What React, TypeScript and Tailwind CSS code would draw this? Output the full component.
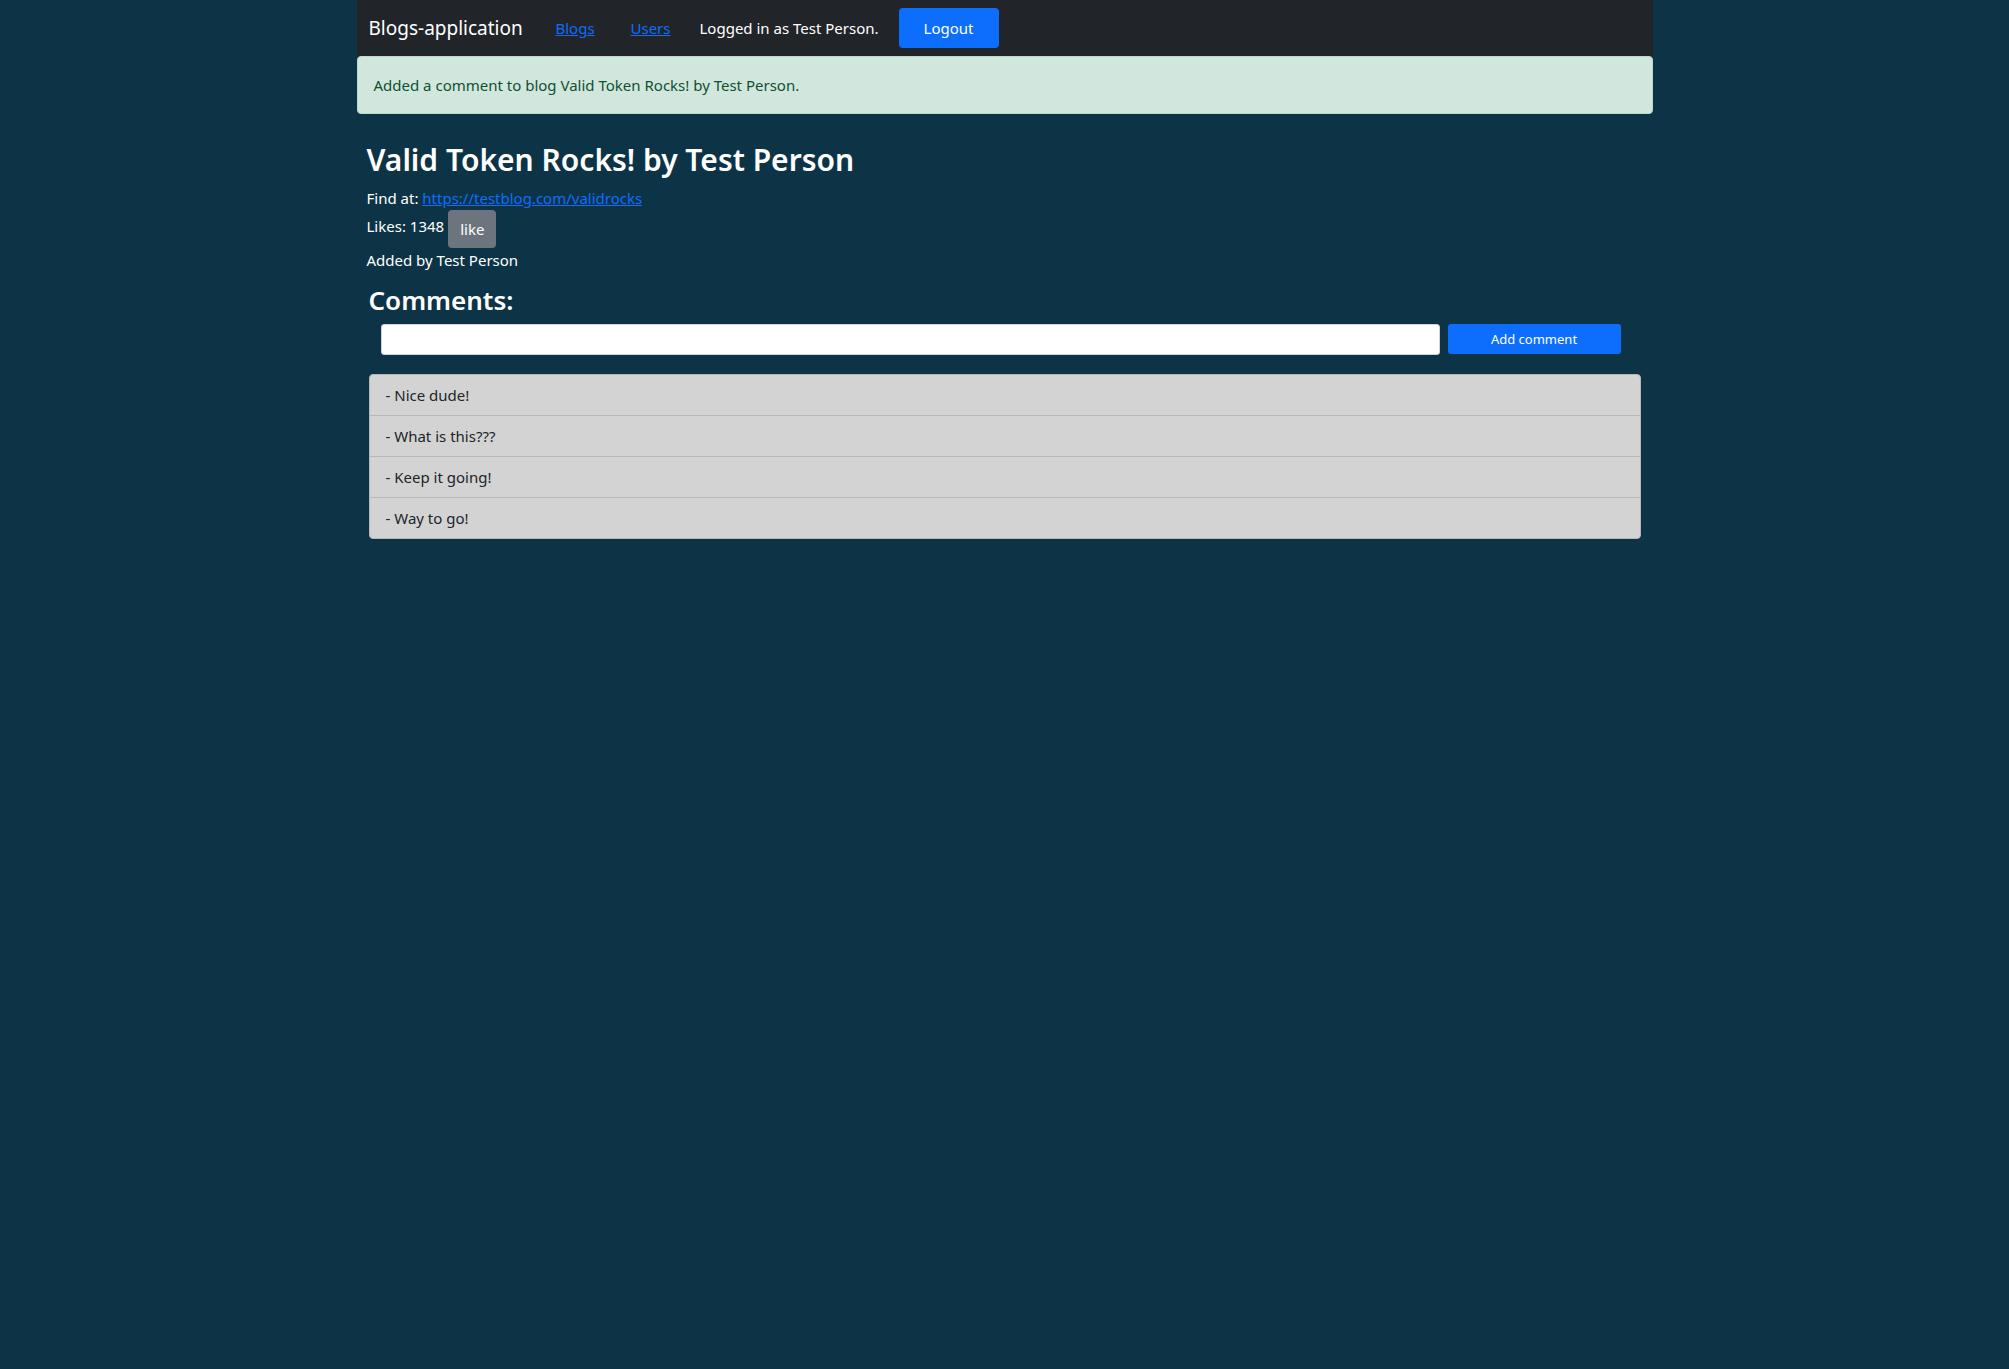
const comments = ['Nice dude!', 'What is this???', 'Keep it going!', 'Way to go!'];

function NavBar() {
  return (
    <nav className="flex h-14 items-center bg-[#212529] px-3 text-white">
      <a href="#" className="w-[187px] text-[19px] leading-[30px]">Blogs-application</a>
      <a href="#blogs" className="w-[75px] text-[#0d6efd] underline">Blogs</a>
      <a href="#users" className="w-[69px] text-[#0d6efd] underline">Users</a>
      <span className="w-[199px]">Logged in as Test Person.</span>
      <button type="button" className="h-10 w-[100px] rounded bg-[#0d6efd]">Logout</button>
    </nav>
  );
}

export default function App() {
  return (
    <div className="min-h-screen bg-[#0d3446] font-['Noto_Sans','Open_Sans',sans-serif] text-[15px] leading-6 text-white">
      <div className="mx-auto max-w-[1296px]">
        <NavBar />
        <div role="alert" className="rounded border border-[#badbcc] bg-[#d1e7dd] p-4 text-[#0f5132]">
          Added a comment to blog Valid Token Rocks! by Test Person.
        </div>
        <main className="pt-6">
          <section className="px-2.5">
            <h2 className="pb-2 pt-1 text-[30px] font-semibold leading-9">Valid Token Rocks! by Test Person</h2>
            <p>
              Find at:{' '}
              <a href="https://testblog.com/validrocks" className="text-[#0d6efd] underline">https://testblog.com/validrocks</a>
            </p>
            <div className="flex items-start gap-1">
              <span className="pt-1">Likes: 1348</span>
              <button type="button" className="h-[38px] rounded bg-[#6c757d] px-3">like</button>
            </div>
            <p>Added by Test Person</p>
          </section>
          <section className="px-3 pt-2.5">
            <h3 className="pb-1.5 text-[26px] font-semibold leading-9">Comments:</h3>
            <form className="flex items-start gap-2 pl-3 pr-5" onSubmit={(e) => e.preventDefault()}>
              <input
                type="text"
                aria-label="Comment"
                className="h-[31px] min-w-0 flex-1 rounded-[3px] border border-[#ced4da] bg-white px-2 text-sm text-[#212529]"
              />
              <button type="submit" className="h-[30px] w-[173px] rounded-[3px] bg-[#0d6efd] text-[13px]">Add comment</button>
            </form>
            <ul className="mt-[19px] divide-y divide-[#b7b7b7] rounded border border-[#b7b7b7] bg-[#d3d3d3] text-[#212529]">
              {comments.map((comment) => (
                <li key={comment} className="px-4 py-2">- {comment}</li>
              ))}
            </ul>
          </section>
        </main>
      </div>
    </div>
  );
}
